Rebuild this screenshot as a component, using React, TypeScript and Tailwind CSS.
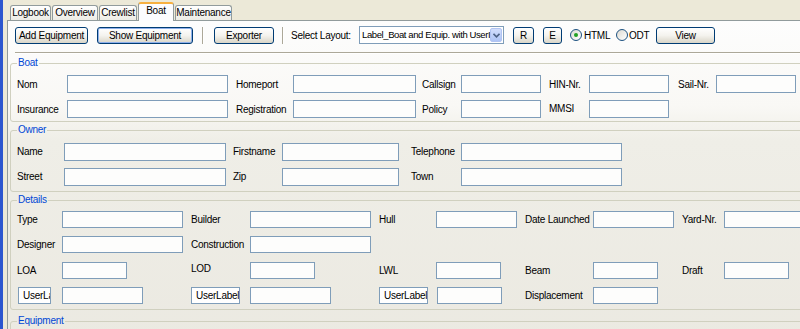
import React from 'react';

interface BoxProps {
    w: string;
    children?: React.ReactNode;
}

function Label({ w, children }: BoxProps) {
    return <span className={`block shrink-0 whitespace-nowrap ${w}`}>{children}</span>;
}

function Field({ w }: BoxProps) {
    return <div className={`h-full shrink-0 border border-[#7f9db9] bg-[#fdfdfc] ${w}`} />;
}

function Btn({ w, children, def }: BoxProps & { def?: boolean }) {
    return (
        <div
            className={`h-[17px] shrink-0 flex items-center justify-center whitespace-nowrap rounded-[3px] border border-[#003c74] bg-gradient-to-b from-white via-[#f4f3ee] to-[#d9d5c8] ${def ? 'shadow-[inset_0_0_0_1px_#8fb0ea]' : ''} ${w}`}
        >
            {children}
        </div>
    );
}

function UserBtn({ w }: BoxProps) {
    return (
        <div className={`h-full shrink-0 overflow-hidden whitespace-nowrap border border-[#7f9db9] bg-white pl-[4px] leading-[15px] ${w}`}>
            UserLabel
        </div>
    );
}

function Tab({ w, children, active }: BoxProps & { active?: boolean }) {
    if (active) {
        return (
            <div className={`relative z-10 -mb-px h-[19px] shrink-0 rounded-t-[3px] border border-b-0 border-[#919b9c] border-t-[2px] border-t-[#f7b03f] bg-[#fcfcfe] text-center leading-[13px] ${w}`}>
                {children}
            </div>
        );
    }
    return (
        <div className={`h-[15px] shrink-0 overflow-hidden whitespace-nowrap rounded-t-[3px] border border-b-0 border-[#919b9c] bg-gradient-to-b from-white to-[#ecebe4] text-center leading-[14px] ${w}`}>
            {children}
        </div>
    );
}

function Sep({ w }: BoxProps) {
    return <div className={`h-[17px] w-[2px] shrink-0 border-l border-[#aca899] border-r border-r-white ${w}`} />;
}

function Legend({ children }: { children: React.ReactNode }) {
    return <legend className="px-[1px] leading-[12px] text-[#0046d5]">{children}</legend>;
}

export default function App() {
    return (
        <div className="flex h-[329px] w-[800px] overflow-hidden bg-[#ece9d8] font-['Liberation_Sans',Arial,sans-serif] text-[10px] tracking-[-0.25px] text-black">
            <div className="w-[3px] shrink-0 bg-[#2c56cf]" />
            <div className="flex min-w-0 flex-1 flex-col pl-[4px]">
                {/* tabs */}
                <div className="flex h-[20px] shrink-0 items-end gap-[1px] pl-[3px]">
                    <Tab w="w-[41px]">Logbook</Tab>
                    <Tab w="w-[46px]">Overview</Tab>
                    <Tab w="w-[38px]">Crewlist</Tab>
                    <Tab w="w-[36px]" active>Boat</Tab>
                    <Tab w="w-[57px]">Maintenance</Tab>
                </div>

                {/* panel */}
                <div className="flex-1 border-l border-t border-[#919b9c] bg-[linear-gradient(to_bottom,#fdfdfd_0px,#f9f8f5_85px,#efeee7_120px,#ebe9e1_100%)]">
                    {/* toolbar */}
                    <div className="ml-[7px] mt-[5px] flex h-[18px] items-center">
                        <Btn w="w-[73px]">Add Equipment</Btn>
                        <Btn w="ml-[9px] w-[96px]" def>Show Equipment</Btn>
                        <Sep w="ml-[9px]" />
                        <Btn w="ml-[10px] w-[60px]">Exporter</Btn>
                        <Sep w="ml-[8px]" />
                        <Label w="ml-[7px] w-[68px]">Select Layout:</Label>
                        <div className="flex h-[18px] w-[145px] shrink-0 items-center border border-[#7f9db9] bg-white">
                            <span className="flex-1 overflow-hidden whitespace-nowrap pl-[2px] text-[9.5px] tracking-[-0.4px]">Label_Boat and Equip. with UserI</span>
                            <div className="mr-px flex h-[14px] w-[12px] shrink-0 items-center justify-center rounded-[2px] border border-[#b1c4f2] bg-gradient-to-b from-[#d2defc] to-[#aec4f5]">
                                <svg width="7" height="5" viewBox="0 0 7 5">
                                    <path d="M0.5 0.8 L3.5 3.8 L6.5 0.8" fill="none" stroke="#4d6185" strokeWidth="1.6" />
                                </svg>
                            </div>
                        </div>
                        <Btn w="ml-[9px] w-[21px]">R</Btn>
                        <Btn w="ml-[9px] w-[19px]">E</Btn>
                        <div className="ml-[8px] flex h-[12px] w-[12px] shrink-0 items-center justify-center rounded-full border border-[#1c5180] bg-gradient-to-br from-[#dcdad2] to-white">
                            <div className="h-[4px] w-[4px] rounded-full bg-[#21a121]" />
                        </div>
                        <Label w="ml-[2px] w-[32px]">HTML</Label>
                        <div className="h-[12px] w-[12px] shrink-0 rounded-full border border-[#1c5180] bg-gradient-to-br from-[#dcdad2] to-white" />
                        <Label w="ml-[1px] w-[27px]">ODT</Label>
                        <Btn w="w-[59px]">View</Btn>
                    </div>

                    {/* separator line */}
                    <div className="ml-[7px] mt-[8px] h-[2px] border-t border-[#aca899] border-b border-b-white" />

                    {/* Boat */}
                    <fieldset className="ml-[2px] mt-[3px] w-[810px] rounded-[3px] border border-[#d0d0bf] pb-[3px] pl-[6px] pt-[6px]">
                        <Legend>Boat</Legend>
                        <div className="flex h-[18px] items-center">
                            <Label w="w-[50px]">Nom</Label>
                            <Field w="w-[161px]" />
                            <Label w="ml-[8px] w-[57px]">Homeport</Label>
                            <Field w="w-[123px]" />
                            <Label w="ml-[6px] w-[39px]">Callsign</Label>
                            <Field w="w-[80px]" />
                            <Label w="ml-[8px] w-[40px]">HIN-Nr.</Label>
                            <Field w="w-[80px]" />
                            <Label w="ml-[9px] w-[38px]">Sail-Nr.</Label>
                            <Field w="w-[80px]" />
                        </div>
                        <div className="mt-[7px] flex h-[18px] items-center">
                            <Label w="w-[50px]">Insurance</Label>
                            <Field w="w-[161px]" />
                            <Label w="ml-[8px] w-[57px]">Registration</Label>
                            <Field w="w-[123px]" />
                            <Label w="ml-[6px] w-[39px]">Policy</Label>
                            <Field w="w-[80px]" />
                            <Label w="ml-[8px] w-[40px] self-start pt-[1px]">MMSI</Label>
                            <Field w="w-[80px]" />
                        </div>
                    </fieldset>

                    {/* Owner */}
                    <fieldset className="ml-[2px] mt-[2px] w-[810px] rounded-[3px] border border-[#d0d0bf] pb-[5px] pl-[6px] pt-[7px]">
                        <Legend>Owner</Legend>
                        <div className="flex h-[18px] items-center">
                            <Label w="w-[47px] self-start pt-[1px]">Name</Label>
                            <Field w="w-[162px]" />
                            <Label w="ml-[7px] w-[49px] self-start pt-[1px]">Firstname</Label>
                            <Field w="w-[117px]" />
                            <Label w="ml-[12px] w-[50px] self-start pt-[1px]">Telephone</Label>
                            <Field w="w-[161px]" />
                        </div>
                        <div className="mt-[7px] flex h-[18px] items-center">
                            <Label w="w-[47px] self-start pt-[1px]">Street</Label>
                            <Field w="w-[162px]" />
                            <Label w="ml-[7px] w-[49px] self-start pt-[1px]">Zip</Label>
                            <Field w="w-[117px]" />
                            <Label w="ml-[12px] w-[50px] self-start pt-[1px]">Town</Label>
                            <Field w="w-[161px]" />
                        </div>
                    </fieldset>

                    {/* Details */}
                    <fieldset className="ml-[2px] mt-[2px] w-[810px] rounded-[3px] border border-[#d0d0bf] pb-[5px] pl-[6px] pt-[5px]">
                        <Legend>Details</Legend>
                        <div className="flex h-[17px] items-center">
                            <Label w="w-[45px]">Type</Label>
                            <Field w="w-[121px]" />
                            <Label w="ml-[8px] w-[59px]">Builder</Label>
                            <Field w="w-[121px]" />
                            <Label w="ml-[8px] w-[57px]">Hull</Label>
                            <Field w="w-[81px]" />
                            <Label w="ml-[8px] w-[68px]">Date Launched</Label>
                            <Field w="w-[81px]" />
                            <Label w="ml-[8px] w-[42px]">Yard-Nr.</Label>
                            <Field w="w-[81px]" />
                        </div>
                        <div className="mt-[8px] flex h-[17px] items-center">
                            <Label w="w-[45px]">Designer</Label>
                            <Field w="w-[121px]" />
                            <Label w="ml-[8px] w-[59px]">Construction</Label>
                            <Field w="w-[121px]" />
                        </div>
                        <div className="mt-[9px] flex h-[17px] items-center">
                            <Label w="w-[45px]">LOA</Label>
                            <Field w="w-[65px]" />
                            <Label w="ml-[64px] w-[59px] self-start -mt-[1px]">LOD</Label>
                            <Field w="w-[65px]" />
                            <Label w="ml-[64px] w-[57px]">LWL</Label>
                            <Field w="w-[65px]" />
                            <Label w="ml-[24px] w-[68px]">Beam</Label>
                            <Field w="w-[65px]" />
                            <Label w="ml-[24px] w-[42px]">Draft</Label>
                            <Field w="w-[65px]" />
                        </div>
                        <div className="mt-[8px] flex h-[17px] items-center">
                            <UserBtn w="ml-[1px] w-[33px]" />
                            <Field w="ml-[11px] w-[81px]" />
                            <UserBtn w="ml-[48px] w-[49px]" />
                            <Field w="ml-[10px] w-[81px]" />
                            <UserBtn w="ml-[48px] w-[49px]" />
                            <Field w="ml-[9px] w-[65px]" />
                            <Label w="ml-[23px] w-[68px]">Displacement</Label>
                            <Field w="w-[65px]" />
                        </div>
                    </fieldset>

                    {/* Equipment */}
                    <fieldset className="ml-[2px] mt-[5px] h-[40px] w-[810px] rounded-[3px] border border-[#d0d0bf] pl-[6px]">
                        <Legend>Equipment</Legend>
                    </fieldset>
                </div>
            </div>
        </div>
    );
}
